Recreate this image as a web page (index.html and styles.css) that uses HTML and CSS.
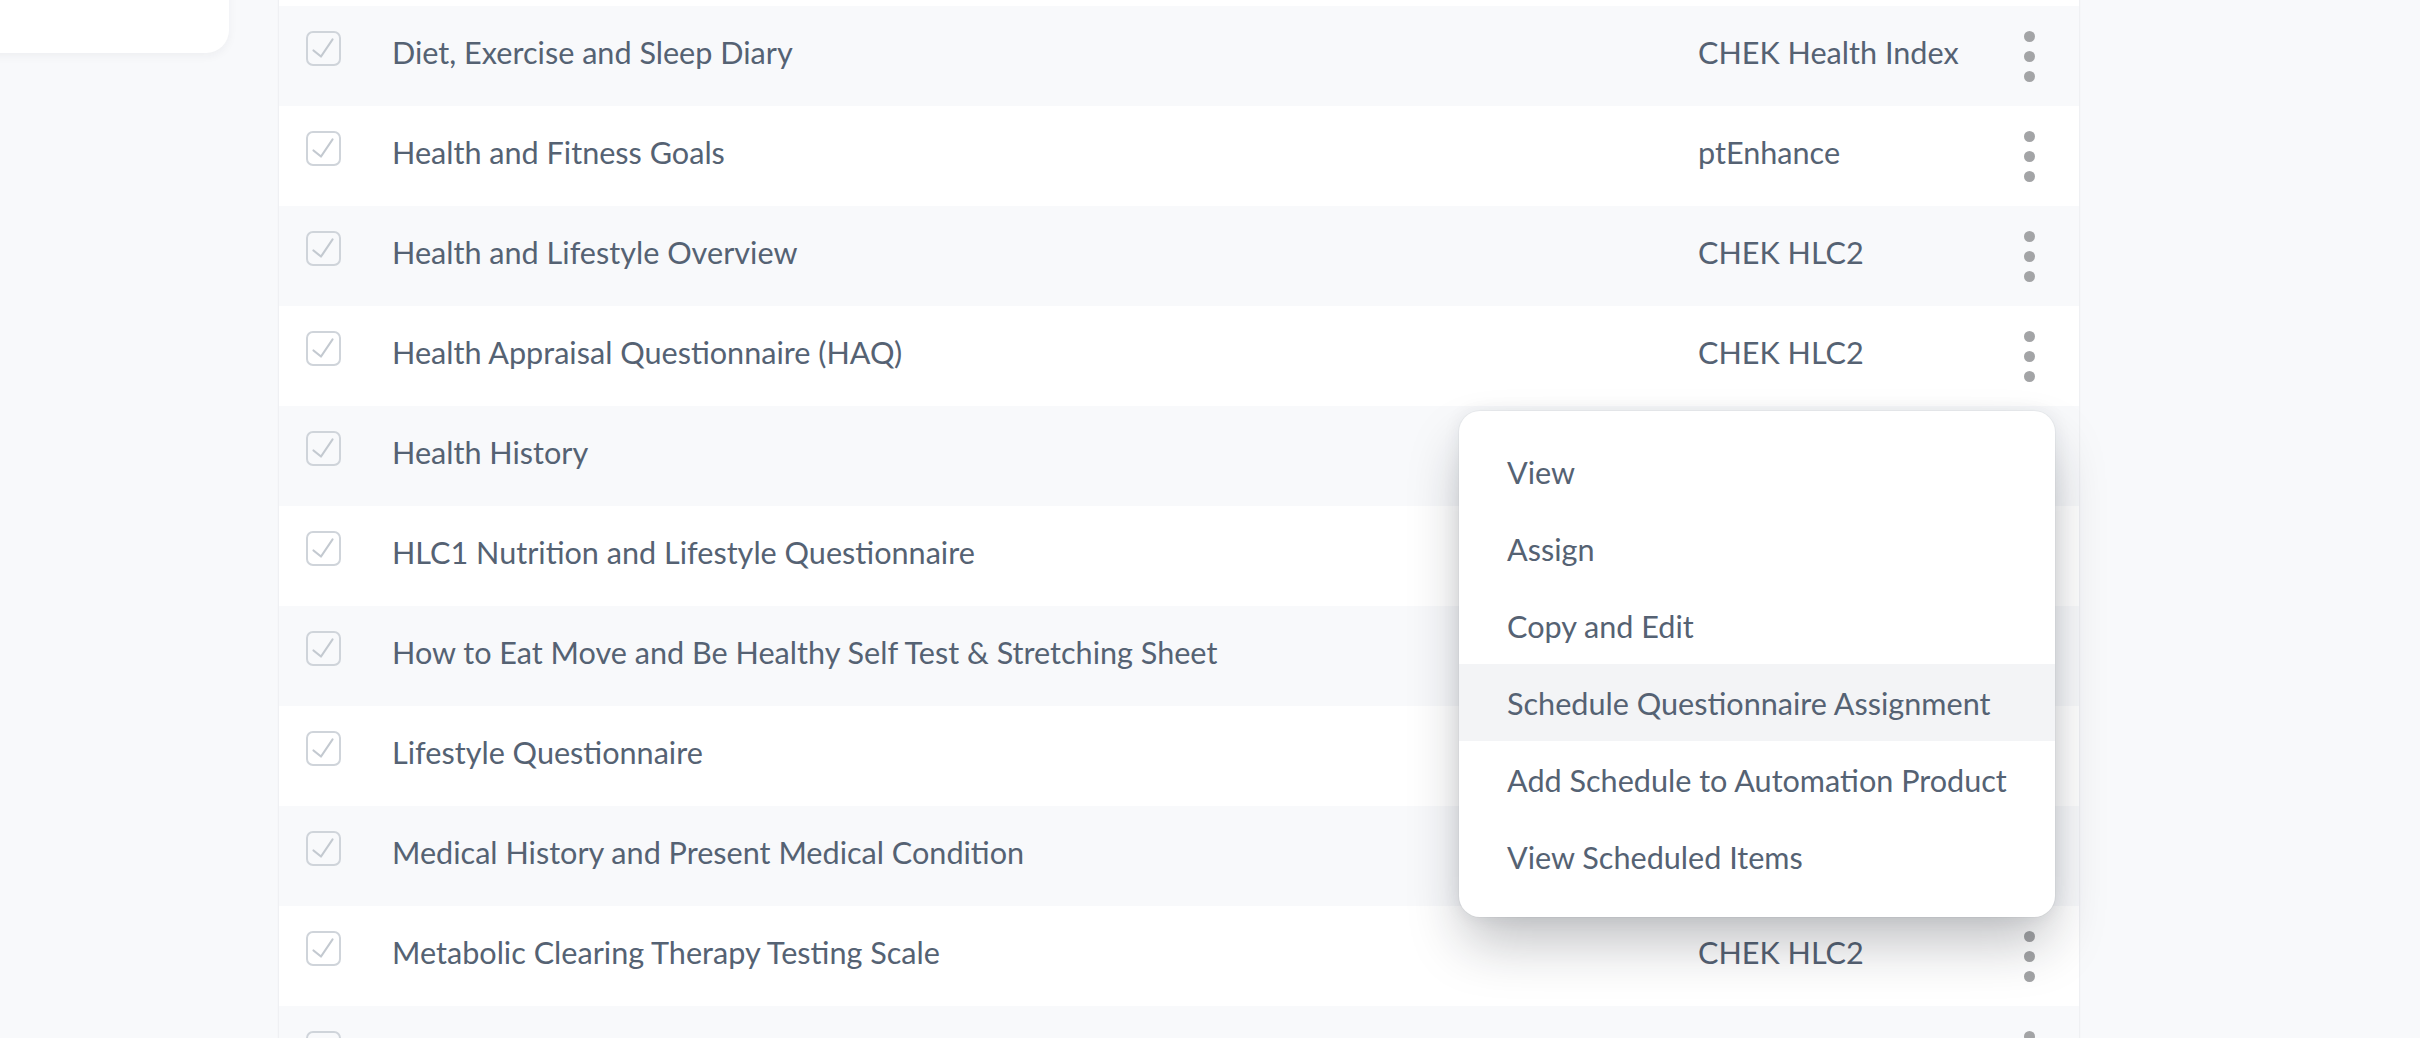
FILE: index.html
```html
<!DOCTYPE html>
<html lang="en">
<head>
<meta charset="utf-8">
<title>Questionnaires</title>
<link rel="stylesheet" href="styles.css">
</head>
<body>
<div class="page">
  <aside class="sidebar">
    <div class="side-card"></div>
  </aside>
  <main class="table-wrap">
    <div class="table">
      <div class="row">
        <span class="check"><svg viewBox="0 0 35 35"><path d="M7.5 19.5 L15 25.5 L26.5 8.5"/></svg></span>
        <span class="name">Daily Food and Mood Journal</span>
        <span class="source">CHEK HLC2</span>
        <span class="kebab"><i></i><i></i><i></i></span>
      </div>
      <div class="row stripe">
        <span class="check"><svg viewBox="0 0 35 35"><path d="M7.5 19.5 L15 25.5 L26.5 8.5"/></svg></span>
        <span class="name">Diet, Exercise and Sleep Diary</span>
        <span class="source">CHEK Health Index</span>
        <span class="kebab"><i></i><i></i><i></i></span>
      </div>
      <div class="row">
        <span class="check"><svg viewBox="0 0 35 35"><path d="M7.5 19.5 L15 25.5 L26.5 8.5"/></svg></span>
        <span class="name">Health and Fitness Goals</span>
        <span class="source">ptEnhance</span>
        <span class="kebab"><i></i><i></i><i></i></span>
      </div>
      <div class="row stripe">
        <span class="check"><svg viewBox="0 0 35 35"><path d="M7.5 19.5 L15 25.5 L26.5 8.5"/></svg></span>
        <span class="name">Health and Lifestyle Overview</span>
        <span class="source">CHEK HLC2</span>
        <span class="kebab"><i></i><i></i><i></i></span>
      </div>
      <div class="row">
        <span class="check"><svg viewBox="0 0 35 35"><path d="M7.5 19.5 L15 25.5 L26.5 8.5"/></svg></span>
        <span class="name">Health Appraisal Questionnaire (HAQ)</span>
        <span class="source">CHEK HLC2</span>
        <span class="kebab"><i></i><i></i><i></i></span>
      </div>
      <div class="row stripe">
        <span class="check"><svg viewBox="0 0 35 35"><path d="M7.5 19.5 L15 25.5 L26.5 8.5"/></svg></span>
        <span class="name">Health History</span>
        <span class="source"></span>
        <span class="kebab"><i></i><i></i><i></i></span>
      </div>
      <div class="row">
        <span class="check"><svg viewBox="0 0 35 35"><path d="M7.5 19.5 L15 25.5 L26.5 8.5"/></svg></span>
        <span class="name">HLC1 Nutrition and Lifestyle Questionnaire</span>
        <span class="source"></span>
        <span class="kebab"><i></i><i></i><i></i></span>
      </div>
      <div class="row stripe">
        <span class="check"><svg viewBox="0 0 35 35"><path d="M7.5 19.5 L15 25.5 L26.5 8.5"/></svg></span>
        <span class="name">How to Eat Move and Be Healthy Self Test &amp; Stretching Sheet</span>
        <span class="source"></span>
        <span class="kebab"><i></i><i></i><i></i></span>
      </div>
      <div class="row">
        <span class="check"><svg viewBox="0 0 35 35"><path d="M7.5 19.5 L15 25.5 L26.5 8.5"/></svg></span>
        <span class="name">Lifestyle Questionnaire</span>
        <span class="source"></span>
        <span class="kebab"><i></i><i></i><i></i></span>
      </div>
      <div class="row stripe">
        <span class="check"><svg viewBox="0 0 35 35"><path d="M7.5 19.5 L15 25.5 L26.5 8.5"/></svg></span>
        <span class="name">Medical History and Present Medical Condition</span>
        <span class="source"></span>
        <span class="kebab"><i></i><i></i><i></i></span>
      </div>
      <div class="row">
        <span class="check"><svg viewBox="0 0 35 35"><path d="M7.5 19.5 L15 25.5 L26.5 8.5"/></svg></span>
        <span class="name">Metabolic Clearing Therapy Testing Scale</span>
        <span class="source">CHEK HLC2</span>
        <span class="kebab"><i></i><i></i><i></i></span>
      </div>
      <div class="row stripe">
        <span class="check"><svg viewBox="0 0 35 35"><path d="M7.5 19.5 L15 25.5 L26.5 8.5"/></svg></span>
        <span class="name">Metabolic Typing Questionnaire</span>
        <span class="source">CHEK HLC2</span>
        <span class="kebab"><i></i><i></i><i></i></span>
      </div>
    </div>
    <ul class="menu">
      <li>View</li>
      <li>Assign</li>
      <li>Copy and Edit</li>
      <li class="active">Schedule Questionnaire Assignment</li>
      <li>Add Schedule to Automation Product</li>
      <li>View Scheduled Items</li>
    </ul>
  </main>
</div>
</body>
</html>
```

FILE: styles.css
```css
html, body {
  margin: 0;
  padding: 0;
  background: #f8f9fb;
  overflow: hidden;
  height: 1038px;
}

body {
  font-family: "Lato", "Open Sans", sans-serif;
  color: #556273;
}

.page {
  display: flex;
  align-items: flex-start;
  gap: 50px;
  margin-top: -94px;
}

.sidebar {
  width: 229px;
  flex: none;
}

.side-card {
  height: 147px;
  margin-left: -40px;
  background: #ffffff;
  border-radius: 0 0 23px 23px;
  box-shadow: 0 3px 10px rgba(30, 40, 60, 0.05);
}

.table-wrap {
  position: relative;
  width: 1800px;
  flex: none;
}

.table {
  background: #ffffff;
  box-shadow: 0 0 2px rgba(30, 40, 60, 0.12);
}

.row {
  display: flex;
  align-items: flex-start;
  height: 100px;
  box-sizing: border-box;
  padding: 0 44px 0 27px;
  background: #ffffff;
}

.row.stripe {
  background: #f8f9fb;
}

.check {
  flex: none;
  width: 35px;
  height: 35px;
  margin-top: 25px;
  box-sizing: border-box;
  border: 2px solid #cfd4da;
  border-radius: 7px;
  position: relative;
}

.check svg {
  position: absolute;
  left: -2px;
  top: -2px;
  width: 35px;
  height: 35px;
}

.check path {
  fill: none;
  stroke: #c3c9d0;
  stroke-width: 2.2;
  stroke-linecap: round;
  stroke-linejoin: round;
}

.name {
  flex: 1;
  margin-left: 51px;
  font-size: 30.6px;
  line-height: 36px;
  padding-top: 28.5px;
  white-space: nowrap;
}

.source {
  flex: none;
  width: 326px;
  font-size: 30.6px;
  line-height: 36px;
  padding-top: 28.5px;
  white-space: nowrap;
}

.kebab {
  flex: none;
  width: 11px;
  align-self: center;
  display: flex;
  flex-direction: column;
  gap: 9px;
}

.kebab i {
  display: block;
  width: 11px;
  height: 11px;
  border-radius: 50%;
  background: #a3a4a6;
}

.menu {
  position: absolute;
  left: 1180px;
  top: 505px;
  width: 596px;
  margin: 0;
  padding: 22px 0;
  list-style: none;
  background: #ffffff;
  border-radius: 21px;
  box-shadow: 0 0 0 1px rgba(30, 40, 60, 0.03), 0 0 18px rgba(30, 40, 60, 0.07), 0 30px 55px -6px rgba(20, 25, 35, 0.28);
}

.menu li {
  height: 77px;
  line-height: 79px;
  padding-left: 48px;
  font-size: 30.6px;
  white-space: nowrap;
  color: #556273;
  overflow: hidden;
}

.menu li.active {
  background: #f3f4f6;
}
```
